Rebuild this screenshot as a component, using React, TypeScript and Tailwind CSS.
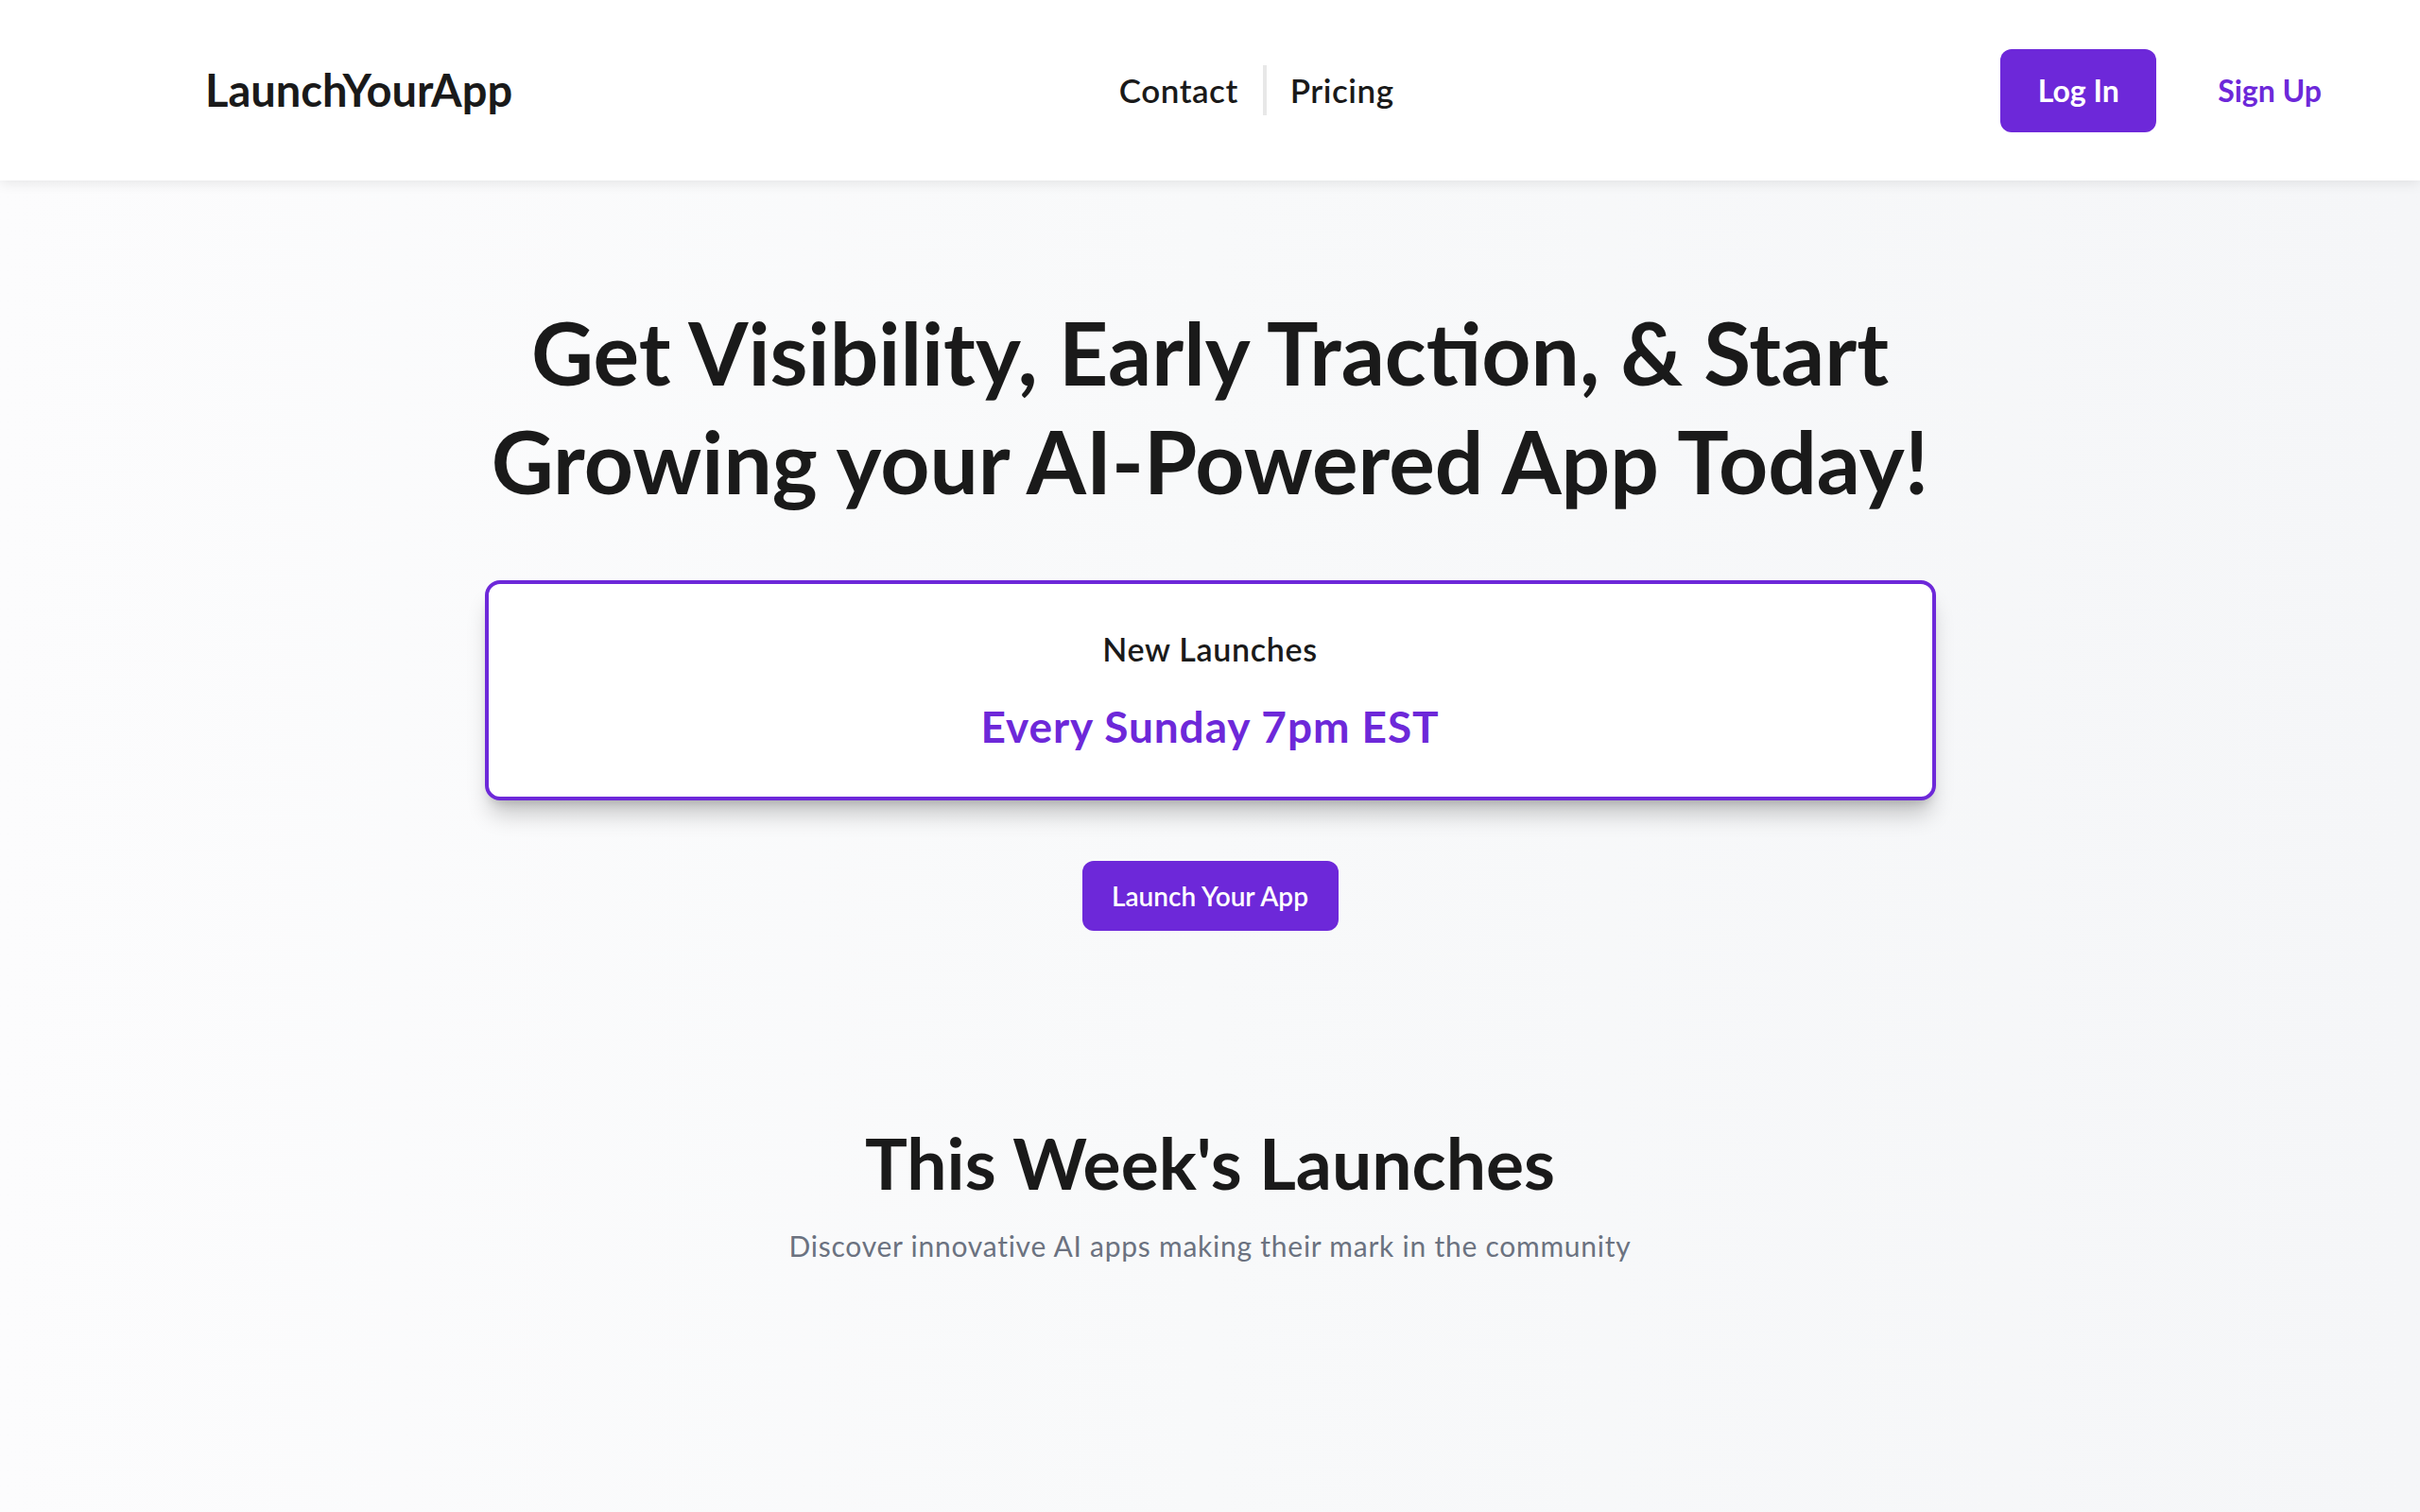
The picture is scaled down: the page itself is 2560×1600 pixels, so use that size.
const font = { fontFamily: "Lato, 'Noto Sans', sans-serif" };

function Navbar() {
  return (
    <header className="relative z-10 flex h-[191px] items-center justify-between bg-white pl-[217px] pr-[104px] shadow-[0_4px_12px_rgba(0,0,0,0.08)]">
      <div className="text-[47px] font-bold leading-none text-[#1a1a1a]">
        LaunchYourApp
      </div>
      <nav className="flex items-center text-[35px] font-semibold leading-none tracking-[0.015em] text-[#1a1a1a]">
        <a className="pr-[26px]">Contact</a>
        <span className="h-[53px] w-[4px] bg-[#e8e8e8]" />
        <a className="pl-[25px]">Pricing</a>
      </nav>
      <div className="flex items-center gap-[65px]">
        <button className="flex h-[88px] w-[165px] items-center justify-center rounded-[12px] bg-[#6d28d9] text-[32px] font-bold leading-none text-white">
          Log In
        </button>
        <button className="text-[32px] font-bold leading-none text-[#6d28d9]">
          Sign Up
        </button>
      </div>
    </header>
  );
}

function Hero() {
  return (
    <section className="flex flex-col items-center">
      <h1 className="mt-[124px] text-center text-[91px] font-bold leading-[115px] text-[#1a1a1a]">
        Get Visibility, Early Traction, &amp; Start
        <br />
        Growing your AI-Powered App Today!
      </h1>
      <div className="mt-[69px] flex w-[1535px] flex-col items-center gap-[42px] rounded-[16px] border-4 border-[#6d28d9] bg-white pb-[51px] pt-[52px] shadow-[0_20px_25px_-5px_rgba(0,0,0,0.2),0_8px_12px_-6px_rgba(0,0,0,0.18)]">
        <p className="text-[34px] font-semibold leading-none tracking-[0.02em] text-[#1a1a1a]">
          New Launches
        </p>
        <p className="text-[46px] font-bold leading-none tracking-[0.02em] text-[#6d28d9]">
          Every Sunday 7pm EST
        </p>
      </div>
      <button className="mt-[64px] flex h-[74px] w-[271px] items-center justify-center rounded-[12px] bg-[#6d28d9] text-[28px] font-semibold leading-none text-white">
        Launch Your App
      </button>
    </section>
  );
}

function WeeklyLaunches() {
  return (
    <section className="flex flex-col items-center pb-[200px]">
      <h2 className="mt-[208px] text-[75px] font-bold leading-none text-[#1a1a1a]">
        This Week's Launches
      </h2>
      <p className="mt-[35px] text-[30px] leading-none tracking-[0.025em] text-[#6b7280]">
        Discover innovative AI apps making their mark in the community
      </p>
    </section>
  );
}

export default function App() {
  return (
    <div
      style={font}
      className="min-h-[1600px] bg-gradient-to-r from-[#fcfcfd] via-[#f8f9fa] to-[#f5f6f8]"
    >
      <Navbar />
      <main>
        <Hero />
        <WeeklyLaunches />
      </main>
    </div>
  );
}
